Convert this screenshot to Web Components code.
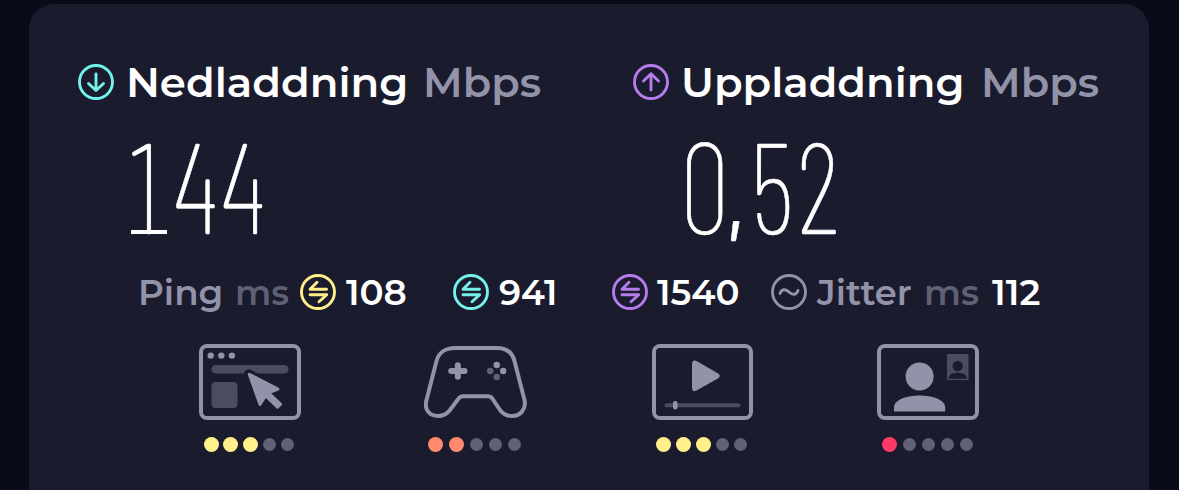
<!DOCTYPE html>
<html lang="sv">
<head>
<meta charset="utf-8">
<title>Hastighet</title>
<style>
  body {
    margin: 0;
    background: #080b18;
    font-family: Montserrat, Inter, "Liberation Sans", sans-serif;
    overflow: hidden;
  }
</style>
</head>
<body>
<speed-result></speed-result>

<script>
// Text stretched so that its visible ink is exactly `width` pixels wide
class FitText extends HTMLElement {
  constructor() {
    super();
    this.attachShadow({ mode: "open" });
  }

  connectedCallback() {
    this.render();
  }

  render() {
    const width = Number(this.getAttribute("width"));
    const height = Number(this.getAttribute("height"));
    const size = Number(this.getAttribute("size"));
    const font = `600 ${size}px Montserrat, Inter, sans-serif`;
    const text = this.getAttribute("text");
    const ctx = document.createElement("canvas").getContext("2d");
    ctx.font = font;
    const m = ctx.measureText(text);
    const scale = width / (m.actualBoundingBoxRight + m.actualBoundingBoxLeft);

    this.shadowRoot.innerHTML = `
    <style>
      :host { display: block; flex: none; width: ${width}px; height: ${height}px; }
      svg { display: block; overflow: visible; }
      text { font: ${font}; fill: currentColor; }
    </style>
    <svg width="${width}" height="${height}">
      <text transform="scale(${scale} 1)" x="${m.actualBoundingBoxLeft}" y="${height}">${text}</text>
    </svg>`;
  }
}
customElements.define("fit-text", FitText);

// Tall thin figures: `lefts` holds the left edge of each glyph, the last glyph ends at `width`
class BigNumber extends HTMLElement {
  constructor() {
    super();
    this.attachShadow({ mode: "open" });
  }

  connectedCallback() {
    this.render();
  }

  render() {
    const width = Number(this.getAttribute("width"));
    const value = this.getAttribute("value");
    const lefts = this.getAttribute("lefts").split(" ").map(Number);
    const family = `"Barlow Condensed", "Roboto Condensed", "DejaVu Sans", sans-serif`;
    const ctx = document.createElement("canvas").getContext("2d");
    ctx.font = `200 129px ${family}`;
    const boxes = [...value].map((c) => ctx.measureText(c));
    const last = boxes[boxes.length - 1];
    const scale = (width - lefts[lefts.length - 1]) / (last.actualBoundingBoxRight + last.actualBoundingBoxLeft);
    const xs = lefts.map((left, i) => left / scale + boxes[i].actualBoundingBoxLeft);
    // the figure one stands on a foot
    const foot = value.startsWith("1") ? `<rect y="86" width="36" height="4" rx="0.500"/>` : "";

    this.shadowRoot.innerHTML = `
    <style>
      :host { display: block; flex: none; width: ${width}px; height: 90px; }
      svg { display: block; overflow: visible; fill: currentColor; }
      text { font: 200 129px ${family}; stroke: currentColor; stroke-width: 0.600px; }
      .comma { font-weight: 500; font-size: 80px; }
    </style>
    <svg width="${width}" height="90">
      <text transform="scale(${scale} 1)" x="${xs.join(" ")}" y="90">${value.replace(",", `<tspan class="comma">,</tspan>`)}</text>
      ${foot}
    </svg>`;
  }
}
customElements.define("big-number", BigNumber);

const ROUND_ICONS = {
  down: `<path d="M18 10v16M10.500 19.500l7.500 7 7.500-7"/>`,
  up: `<path d="M18 26V10M10.500 17l7.500-7.200 7.500 7.200"/>`,
  ping: `<path d="M26.500 15.200H10l7-7M10 20.800h16.700l-7.700 7"/>`,
  jitter: `<path d="M9 19.500c1.500-4.500 5.500-5 9-1.500s7.500 3 9-1.500"/>`
};

class RoundIcon extends HTMLElement {
  constructor() {
    super();
    this.attachShadow({ mode: "open" });
  }

  connectedCallback() {
    this.shadowRoot.innerHTML = `
    <style>
      :host { display: block; flex: none; width: 36px; height: 36px; }
      svg { display: block; fill: none; stroke: currentColor; stroke-width: 2.900; stroke-linecap: round; stroke-linejoin: round; }
    </style>
    <svg width="36" height="36" viewBox="0 0 36 36">
      <circle cx="18" cy="18" r="16.500"/>
      ${ROUND_ICONS[this.getAttribute("name")]}
    </svg>`;
  }
}
customElements.define("round-icon", RoundIcon);

const PICTURES = {
  web: `
    <rect class="line" x="2" y="2" width="98" height="72" rx="6"/>
    <g class="fill"><circle cx="11.700" cy="11.600" r="3.200"/><circle cx="22.300" cy="11.600" r="3.200"/><circle cx="32.900" cy="11.600" r="3.200"/></g>
    <rect class="dim" x="12.500" y="21" width="77" height="8.500" rx="4.200"/>
    <rect class="dim" x="12.500" y="38" width="26" height="26" rx="4"/>
    <path class="gap" d="M49.800 30.300L61 60.500l4.500-7.500 14.500 10.500 2-2.500-12.500-11.500L79.500 46z"/>
    <path class="fill round" d="M50.300 30.300L61 60.500l5.500-8.800 12 11.500 3-3-12-11.300L79 45.200z"/>`,
  game: `
    <path class="line" d="M31 4h42c10 0 15.500 5 17.500 13l10 39c2 9-4 16-12.500 16-5 0-9-2-12-6L69 55.500Q67 52.300 64 52.300H39q-3 0-5 3L26 66c-3 4-7 6-12 6C5 72 0 65 2.500 56l10-39C14.500 9 21 4 31 4z"/>
    <path class="plus" d="M33.800 21.200v11.600M27.200 27H40.500"/>
    <g class="fill"><circle cx="72.700" cy="21" r="3.200"/><circle cx="79.200" cy="27" r="3.200"/></g>
    <g class="dim2"><circle cx="66.200" cy="27" r="3.200"/><circle cx="72.700" cy="33" r="3.200"/></g>`,
  video: `
    <rect class="line" x="2" y="2" width="97" height="72" rx="6"/>
    <path class="fill" d="M40 20.500v23q0 5.500 5 2.700L65.800 34.500q4-2.600 0-5.200L45 17.300q-5-2.300-5 3.200z"/>
    <rect class="dim" x="12.500" y="59.200" width="76" height="4" rx="2"/>
    <rect class="fill" x="21" y="57" width="4.500" height="8.500" rx="2"/>`,
  call: `
    <rect class="line" x="2" y="2" width="98" height="72" rx="6"/>
    <circle class="fill" cx="42.600" cy="32.500" r="14"/>
    <path class="fill" d="M17 67.500v-4c0-8 13-12 25.600-12S68.200 55.500 68.200 63.500v4z"/>
    <rect class="dim" x="70" y="10" width="21.500" height="26"/>
    <circle class="hole" cx="80.700" cy="22" r="5.200"/>
    <path class="hole" d="M71.500 34.700c0-4 4-6 9.200-6s9.300 2 9.300 6z"/>`
};

class UseCase extends HTMLElement {
  constructor() {
    super();
    this.attachShadow({ mode: "open" });
  }

  connectedCallback() {
    const score = Number(this.getAttribute("score"));
    let dots = "";
    for (let i = 0; i < 5; i++) {
      dots += `<i class="${i < score ? "on" : ""}"></i>`;
    }
    this.shadowRoot.innerHTML = `
    <style>
      :host { display: flex; flex-direction: column; gap: 17px; flex: none; width: 103px; }
      svg { display: block; }
      .line { fill: none; stroke: #9293a8; stroke-width: 4; stroke-linejoin: round; }
      .fill { fill: #9293a8; }
      .round { stroke: #9293a8; stroke-width: 3; stroke-linejoin: round; }
      .dim { fill: #4b4d5f; }
      .dim2 { fill: #616175; }
      .hole { fill: #1b1b2e; }
      .gap { fill: #1b1b2e; stroke: #1b1b2e; stroke-width: 10; stroke-linejoin: round; }
      .plus { fill: none; stroke: #9293a8; stroke-width: 6; stroke-linecap: round; }
      .dots {
        display: flex;
        align-items: center;
        gap: var(--dot-gap, 5px);
        height: 15px;
        padding-left: var(--dot-start, 4px);
      }
      i { flex: none; width: 13px; height: 13px; border-radius: 50%; background: #616175; }
      i.on { width: 15px; height: 15px; background: var(--dot-color); }
    </style>
    <svg width="103" height="76" viewBox="0 0 103 76">${PICTURES[this.getAttribute("name")]}</svg>
    <div class="dots">${dots}</div>`;
  }
}
customElements.define("use-case", UseCase);

class SpeedResult extends HTMLElement {
  constructor() {
    super();
    this.attachShadow({ mode: "open" });
  }

  connectedCallback() {
    this.shadowRoot.innerHTML = `
    <style>
      :host {
        display: block;
        box-sizing: border-box;
        width: 1120px;
        height: 486px;
        margin: 4px 0 0 29px;
        padding-top: 60px;
        border-radius: 25px 25px 0 0;
        background: #1b1b2e;
        color: #fff;
      }
      .row { display: flex; }
      .heads { height: 36px; padding-left: 49px; }
      .values { height: 90px; margin-top: 44px; padding-left: 102px; gap: 425px; }
      .stats { height: 36px; margin-top: 40px; padding-left: 112px; }
      .cases { margin-top: 34px; padding-left: 170px; }
      .download { color: #74f1ea; }
      .upload { color: #b67cec; }
      .idle { color: #fff08c; }
      .muted { color: #9293a8; }
      .faint { color: #5f6074; }
    </style>
    <div class="row heads">
      <round-icon class="download" name="down"></round-icon>
      <fit-text style="margin-left:15px" text="Nedladdning" width="277" height="33" size="41"></fit-text>
      <fit-text class="muted" style="margin-left:20px" text="Mbps" width="115" height="33" size="41"></fit-text>
      <round-icon class="upload" style="margin-left:92px" name="up"></round-icon>
      <fit-text style="margin-left:15px" text="Uppladdning" width="278" height="33" size="41"></fit-text>
      <fit-text class="muted" style="margin-left:22px" text="Mbps" width="115" height="33" size="41"></fit-text>
    </div>
    <div class="row values">
      <big-number value="144" width="131" lefts="1 45 92.500"></big-number>
      <big-number value="0,52" width="149" lefts="0 46 70 115"></big-number>
    </div>
    <div class="row stats">
      <fit-text class="muted" text="Ping" width="80" height="31" size="35"></fit-text>
      <fit-text class="faint" style="margin-left:16px" text="ms" width="52" height="31" size="35"></fit-text>
      <round-icon class="idle" style="margin-left:11px" name="ping"></round-icon>
      <fit-text style="margin-left:10px" text="108" width="60" height="31" size="35"></fit-text>
      <round-icon class="download" style="margin-left:47px" name="ping"></round-icon>
      <fit-text style="margin-left:10px" text="941" width="56" height="31" size="35"></fit-text>
      <round-icon class="upload" style="margin-left:57px" name="ping"></round-icon>
      <fit-text style="margin-left:9px" text="1540" width="82" height="31" size="35"></fit-text>
      <round-icon class="muted" style="margin-left:32px" name="jitter"></round-icon>
      <fit-text class="muted" style="margin-left:9px" text="Jitter" width="95" height="31" size="35"></fit-text>
      <fit-text class="faint" style="margin-left:15px" text="ms" width="53" height="31" size="35"></fit-text>
      <fit-text style="margin-left:13px" text="112" width="48" height="31" size="35"></fit-text>
    </div>
    <div class="row cases">
      <use-case name="web" score="3" style="--dot-color:#fff08c; --dot-start:4.500px; --dot-gap:4.900px"></use-case>
      <use-case name="game" score="2" style="margin-left:122px; --dot-color:#ff8a6c; --dot-start:4px; --dot-gap:6px"></use-case>
      <use-case name="video" score="3" style="margin-left:125px; --dot-color:#fff08c; --dot-start:4px; --dot-gap:4.900px"></use-case>
      <use-case name="call" score="1" style="margin-left:122px; --dot-color:#ff3a68; --dot-start:4.800px; --dot-gap:6px"></use-case>
    </div>`;
  }
}
customElements.define("speed-result", SpeedResult);
</script>
</body>
</html>
